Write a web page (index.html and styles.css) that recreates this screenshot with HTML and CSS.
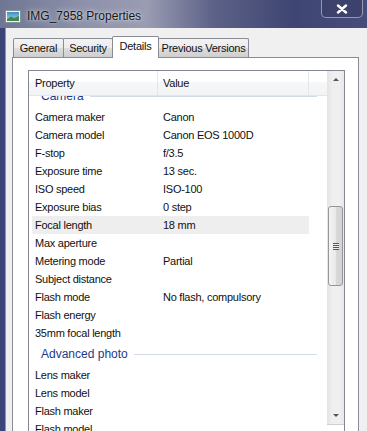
FILE: index.html
```html
<!DOCTYPE html>
<html lang="en">
<head>
    <meta charset="UTF-8">
    <meta name="viewport" content="width=device-width, initial-scale=1.0">
    <title>IMG_7958 Properties</title>
    <link rel="stylesheet" href="styles.css">
</head>

<body>
    <div class="window">
        <div class="titlebar">
            <svg class="appicon" width="16" height="13" viewBox="0 0 16 13">
                <defs>
                    <linearGradient id="sky" x1="0" y1="0" x2="0" y2="1">
                        <stop offset="0" stop-color="#3d8fc4"/>
                        <stop offset="1" stop-color="#a9dbef"/>
                    </linearGradient>
                </defs>
                <rect x="0.5" y="0.5" width="15" height="12" fill="#f4f4f4" stroke="#8a8f9c"/>
                <rect x="2" y="2" width="12" height="9" fill="url(#sky)"/>
                <path d="M2 9 L6 6.5 L9 8 L14 6 L14 11 L2 11 Z" fill="#3f8a52"/>
            </svg>
            <span class="title">IMG_7958 Properties</span>
            <div class="close">
                <svg width="12" height="10" viewBox="0 0 12 10">
                    <path d="M2 1.5 L10 8.5 M10 1.5 L2 8.5" stroke="#fff" stroke-width="2.4" stroke-linecap="round"/>
                </svg>
            </div>
        </div>

        <div class="client">
            <div class="tabs">
                <div class="tab tab_general">General</div>
                <div class="tab tab_security">Security</div>
                <div class="tab tab_details active">Details</div>
                <div class="tab tab_prev">Previous Versions</div>
            </div>

            <div class="panel">
                <div class="listbox">
                    <div class="listmain">
                        <div class="header">
                            <div class="hcell hname">Property</div>
                            <div class="hcell hvalue">Value</div>
                            <div class="hcell hrest"></div>
                        </div>
                        <div class="viewport">
                            <div class="rows">
                                <div class="group"><span>Camera</span></div>
                                <div class="row"><span class="k">Camera maker</span><span class="v">Canon</span></div>
                                <div class="row"><span class="k">Camera model</span><span class="v">Canon EOS 1000D</span></div>
                                <div class="row"><span class="k">F-stop</span><span class="v">f/3.5</span></div>
                                <div class="row"><span class="k">Exposure time</span><span class="v">13 sec.</span></div>
                                <div class="row"><span class="k">ISO speed</span><span class="v">ISO-100</span></div>
                                <div class="row"><span class="k">Exposure bias</span><span class="v">0 step</span></div>
                                <div class="row hot"><span class="k">Focal length</span><span class="v">18 mm</span></div>
                                <div class="row"><span class="k">Max aperture</span><span class="v"></span></div>
                                <div class="row"><span class="k">Metering mode</span><span class="v">Partial</span></div>
                                <div class="row"><span class="k">Subject distance</span><span class="v"></span></div>
                                <div class="row"><span class="k">Flash mode</span><span class="v">No flash, compulsory</span></div>
                                <div class="row"><span class="k">Flash energy</span><span class="v"></span></div>
                                <div class="row"><span class="k">35mm focal length</span><span class="v"></span></div>
                                <div class="group"><span>Advanced photo</span></div>
                                <div class="row"><span class="k">Lens maker</span><span class="v"></span></div>
                                <div class="row"><span class="k">Lens model</span><span class="v"></span></div>
                                <div class="row"><span class="k">Flash maker</span><span class="v"></span></div>
                                <div class="row"><span class="k">Flash model</span><span class="v"></span></div>
                                <div class="row"><span class="k">Camera serial number</span><span class="v"></span></div>
                            </div>
                        </div>
                    </div>
                    <div class="vscroll">
                        <div class="sbtn"><i class="arrow up"></i></div>
                        <div class="track">
                            <div class="thumb"><i class="grip"></i></div>
                        </div>
                        <div class="sbtn"><i class="arrow down"></i></div>
                    </div>
                </div>
            </div>
        </div>
    </div>
</body>
</html>
```

FILE: styles.css
```css
/* 整个窗口 */
    body{
        margin: 0;
        font-family: "Liberation Sans", Arial, sans-serif;
        font-size: 11px;
        color: #111;
    }
    .window{
        width: 367px;
        height: 431px;
        overflow: hidden;
        background-color: #3b4678;
    }

/* 标题栏 */
    .titlebar{
        height: 28px;
        display: flex;
        align-items: flex-start;
        background: linear-gradient(to right, #6f7693 0%, #8c90a9 22%, #9a9cb2 40%, #5d6288 58%, #3f4572 80%, #474d7b 100%);
    }
    .appicon{
        margin: 10px 0 0 5px;
    }
    .title{
        margin: 9px 0 0 6px;
        font-size: 12px;
        color: #151515;
        text-shadow: 0 0 6px rgba(255, 255, 255, 0.8), 0 0 2px rgba(255, 255, 255, 0.6);
    }
    .close{
        margin-left: auto;
        margin-right: 4px;
        width: 42px;
        height: 18px;
        box-sizing: border-box;
        border: 1px solid rgba(220, 224, 240, 0.55);
        border-top: none;
        border-radius: 0 0 5px 5px;
        background-color: rgba(58, 62, 104, 0.7);
        display: flex;
        align-items: center;
        justify-content: center;
    }

/* 客户区 */
    .client{
        margin-left: 5px;
        height: 403px;
        border-left: 1px solid #8d97bb;
        background-color: #f0f0f0;
        padding-top: 8px;
        box-sizing: border-box;
    }
    .tabs{
        display: flex;
        align-items: flex-end;
        height: 21px;
        padding-left: 7px;
    }
    .tab{
        box-sizing: border-box;
        height: 19px;
        margin-right: -1px;
        border: 1px solid #898c95;
        border-bottom: none;
        border-radius: 2px 2px 0 0;
        background: linear-gradient(#f3f3f3, #ebebeb 50%, #dddddd 51%, #cfcfcf);
        text-align: center;
        line-height: 18px;
        letter-spacing: -0.25px;
    }
    .tab_general{ width: 51px; }
    .tab_security{ width: 50px; }
    .tab_details{ width: 47px; }
    .tab_prev{ width: 91px; }
    .tab.active{
        height: 22px;
        margin-bottom: -1px;
        background: #fff;
        position: relative;
        z-index: 1;
        line-height: 19px;
    }

    .panel{
        margin-left: 6px;
        width: 347px;
        height: 380px;
        box-sizing: border-box;
        border: 1px solid #898c95;
        background-color: #fff;
        padding: 12px 13px 0 15px;
    }
    .listbox{
        width: 317px;
        height: 380px;
        box-sizing: border-box;
        border: 1px solid #828790;
        display: flex;
        align-items: flex-start;
    }
    .listmain{
        width: 298px;
    }

/* 表头 */
    .header{
        display: flex;
        height: 25px;
        box-sizing: border-box;
        border-bottom: 1px solid #e5e5e5;
        background: linear-gradient(#ffffff, #ffffff 45%, #f6f7f8 46%, #f2f3f5);
    }
    .hcell{
        box-sizing: border-box;
        line-height: 25px;
        border-right: 1px solid #e3e6ea;
        letter-spacing: -0.25px;
    }
    .hname{
        width: 129px;
        padding-left: 6px;
    }
    .hvalue{
        width: 151px;
        padding-left: 5px;
    }
    .hrest{
        flex: 1;
        border-right: none;
    }

/* 列表内容 */
    .viewport{
        height: 340px;
        overflow: hidden;
    }
    .rows{
        margin-top: -12px;
    }
    .group{
        height: 24px;
        display: flex;
        align-items: center;
        padding-left: 12px;
        margin-right: 10px;
        font-size: 12px;
        color: #1e3a8a;
    }
    .group::after{
        content: "";
        flex: 1;
        height: 1px;
        margin-left: 6px;
        background-color: #d3dbe7;
    }
    .row{
        display: flex;
        height: 18px;
        line-height: 18px;
        margin-left: 3px;
        width: 277px;
        padding-left: 3px;
        box-sizing: border-box;
        letter-spacing: -0.25px;
        white-space: nowrap;
    }
    .row .k{
        width: 128px;
    }
    .row.hot{
        background-color: #eeeeee;
    }

/* 滚动条 */
    .vscroll{
        width: 17px;
        height: 353px;
        display: flex;
        flex-direction: column;
        background: linear-gradient(to right, #e3e3e3, #efefef 30%, #f0f0f0 70%, #e8e8e8);
        border-bottom: 1px solid #d0d0d0;
    }
    .sbtn{
        height: 17px;
        display: flex;
        align-items: center;
        justify-content: center;
    }
    .arrow{
        width: 0;
        height: 0;
        border-left: 3px solid transparent;
        border-right: 3px solid transparent;
    }
    .arrow.up{
        border-bottom: 3px solid #555;
    }
    .arrow.down{
        border-top: 3px solid #555;
    }
    .track{
        flex: 1;
    }
    .thumb{
        margin: 118px 1px 0 1px;
        height: 80px;
        box-sizing: border-box;
        border: 1px solid #979797;
        border-radius: 3px;
        background: linear-gradient(to right, #f4f4f4, #e9e9e9 50%, #dadada 51%, #d3d3d3);
        display: flex;
        align-items: center;
        justify-content: center;
    }
    .grip{
        display: block;
        width: 6px;
        height: 7px;
        background: repeating-linear-gradient(#555 0, #555 1px, #eee 1px, #eee 2px);
    }
```
